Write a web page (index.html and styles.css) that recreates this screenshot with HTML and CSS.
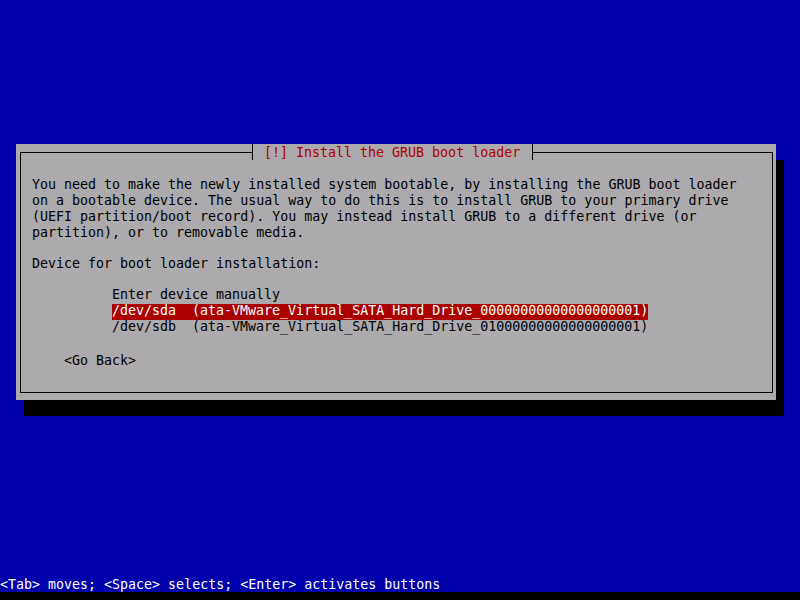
FILE: index.html
```html
<!DOCTYPE html>
<html lang="en">
<head>
    <meta charset="UTF-8">
    <meta name="viewport" content="width=device-width, initial-scale=1.0">
    <title>Install the GRUB boot loader</title>
    <link rel="stylesheet" href="styles.css">
</head>
<body>
    <div class="screen">
        <div class="dialog">
            <div class="frame">
                <div class="title">[!] Install the GRUB boot loader</div>
                <p class="message">You need to make the newly installed system bootable, by installing the GRUB boot loader
on a bootable device. The usual way to do this is to install GRUB to your primary drive
(UEFI partition/boot record). You may instead install GRUB to a different drive (or
partition), or to removable media.</p>
                <p class="question">Device for boot loader installation:</p>
                <ul class="choices">
                    <li>Enter device manually</li>
                    <li class="selected">/dev/sda  (ata-VMware_Virtual_SATA_Hard_Drive_00000000000000000001)</li>
                    <li>/dev/sdb  (ata-VMware_Virtual_SATA_Hard_Drive_01000000000000000001)</li>
                </ul>
                <div class="buttons">&lt;Go Back&gt;</div>
            </div>
        </div>
        <div class="help">&lt;Tab&gt; moves; &lt;Space&gt; selects; &lt;Enter&gt; activates buttons</div>
    </div>
</body>
</html>
```

FILE: styles.css
```css
:root {
    --blue: #0000aa;
    --grey: #acaaac;
    --red: #aa0000;
    --ink: #000;
}

* {
    margin: 0;
    padding: 0;
    box-sizing: border-box;
}

body {
    background: #000;
    font-family: "DejaVu Sans Mono", "Liberation Mono", monospace;
    font-size: 13.3px;
    line-height: 16px;
    overflow: hidden;
}

.screen {
    width: 800px;
    height: 592px;
    background: var(--blue);
    padding-top: 144px;
    display: flex;
    flex-direction: column;
}

.dialog {
    width: 760px;
    height: 256px;
    margin-left: 16px;
    padding: 8px 3px 7px 4px;
    background: var(--grey);
    box-shadow: 8px 16px 0 #000;
    color: var(--ink);
}

.frame {
    position: relative;
    height: 100%;
    border: 1px solid var(--ink);
    padding: 23px 0 0 11px;
}

.title {
    position: absolute;
    top: -9px;
    left: 231px;
    width: 281px;
    height: 16px;
    padding: 1px 0 0 11px;
    border-left: 1px solid var(--ink);
    border-right: 1px solid var(--ink);
    background: var(--grey);
    color: var(--red);
    white-space: pre;
}

.message {
    white-space: pre;
    padding-top: 1px;
}

.question {
    margin-top: 15px;
}

.choices {
    list-style: none;
    margin: 16px 0 0 80px;
}

.choices li {
    width: 536px;
    height: 16px;
    line-height: 13px;
    white-space: pre;
}

.choices .selected {
    background: var(--red);
    color: #fff;
}

.buttons {
    margin: 16px 0 0 32px;
    padding-top: 1px;
}

.help {
    margin-top: auto;
    height: 16px;
    padding-top: 1px;
    color: #fff;
    white-space: pre;
}
```
